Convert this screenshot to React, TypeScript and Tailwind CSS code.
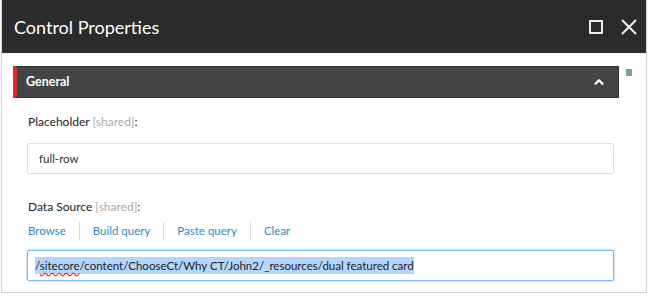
import { ChevronUp } from 'lucide-react'

function LinkSep() {
  return <span className="mx-[13px] h-[18px] w-px bg-[#dcdcdc]" />
}

export default function App() {
  return (
    <div className="w-[650px] h-[297px] bg-white font-['Lato',sans-serif]">
      <div className="ml-px w-[646px] h-[293px] border-x border-b border-[#d4d4d4] flex flex-col">
        {/* Title bar */}
        <div className="h-[53px] bg-[#2b2b2b] flex items-center justify-between pl-[12px] pr-[9px] shrink-0">
          <span className="text-white text-[18px] pt-[2px]">Control Properties</span>
          <div className="flex items-center gap-[18px] text-[#eeeeee]">
            <svg viewBox="0 0 14 14" className="w-[14px] h-[14px]" fill="none" stroke="currentColor" strokeWidth="2">
              <rect x="1" y="1" width="12" height="12" />
            </svg>
            <svg viewBox="0 0 16 16" className="w-[16px] h-[16px]" fill="none" stroke="currentColor" strokeWidth="2">
              <path d="M1 1L15 15M15 1L1 15" />
            </svg>
          </div>
        </div>

        {/* Body */}
        <div className="pt-[13px] px-[11px]">
          <div className="flex items-start">
            <div className="w-[606px] h-[32px] bg-[#444444] border border-[#333333] border-l-[4px] border-l-[#e02b2b] flex items-center justify-between pl-[9px] pr-[12px]">
              <span className="text-white text-[12.5px] font-bold">General</span>
              <ChevronUp className="w-[14px] h-[14px] text-white" strokeWidth={4} />
            </div>
            <div className="ml-[7px] mt-[3px] w-[6px] h-[7px] bg-[#6fa996]" />
          </div>

          <div className="pl-[14px]">
            <div className="pl-px mt-[16px] text-[12px] leading-[16px] text-[#222222]">
              Placeholder <span className="text-[#aaaaaa]">[shared]</span>:
            </div>
            <div className="mt-[13px] w-[587px] h-[31px] border border-[#dddddd] rounded-[2px] flex items-center pl-[11px] text-[11.5px] text-[#333333]">
              full-row
            </div>

            <div className="pl-px mt-[25px] text-[12px] leading-[16px] text-[#222222]">
              Data Source <span className="text-[#aaaaaa]">[shared]</span>:
            </div>
            <div className="pl-px mt-[6px] h-[20px] flex items-center text-[11.5px] text-[#2b8ac6]">
              <span>Browse</span>
              <LinkSep />
              <span>Build query</span>
              <LinkSep />
              <span>Paste query</span>
              <LinkSep />
              <span>Clear</span>
            </div>
            <div className="mt-[9px] w-[587px] h-[31px] border border-[#7fb5e6] rounded-[2px] shadow-[0_0_3px_rgba(100,160,230,0.6)] flex items-center pl-[7px] text-[11.5px] text-[#222222]">
              <span className="bg-[#b5d5fb] leading-[17px]">
                /<span className="underline decoration-wavy decoration-[#e02020] underline-offset-2">sitecore</span>/content/ChooseCt/Why CT/John2/_resources/dual featured card
              </span>
            </div>
          </div>
        </div>
      </div>
    </div>
  )
}
